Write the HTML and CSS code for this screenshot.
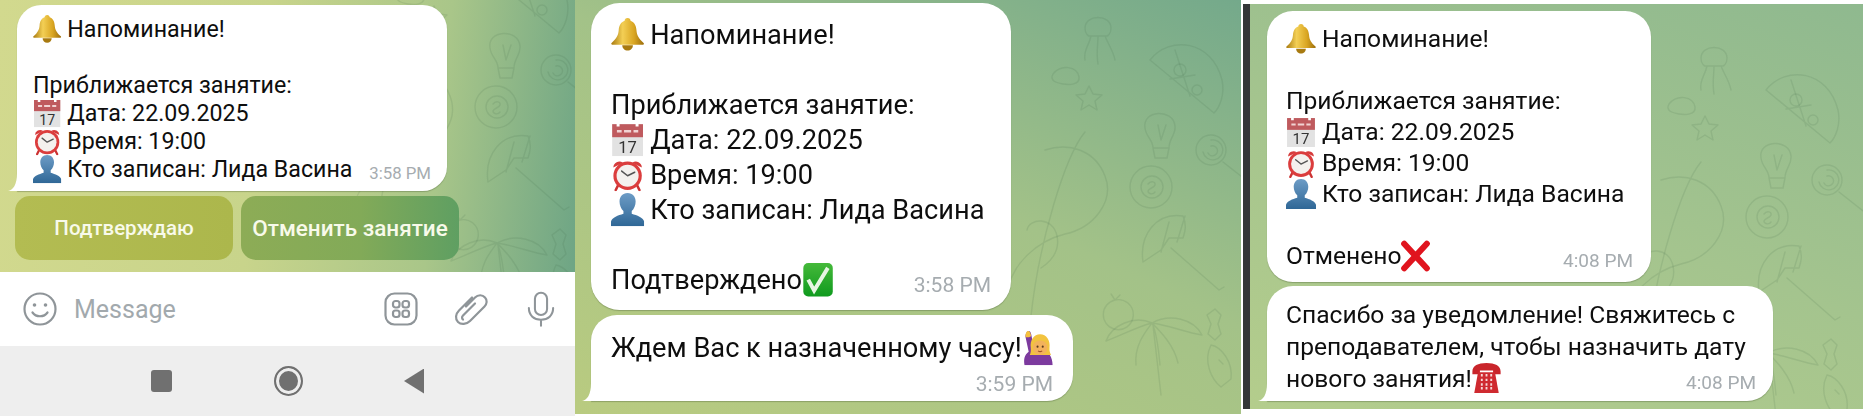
FILE: index.html
```html
<!DOCTYPE html>
<html lang="ru">
<head>
<meta charset="utf-8">
<title>Напоминание</title>
<link rel="stylesheet" href="styles.css">
</head>
<body>
<svg class="defs" xmlns="http://www.w3.org/2000/svg" aria-hidden="true">
  <defs>
    <linearGradient id="gold" x1="0" x2="1" y1="0" y2="0"><stop offset="0" stop-color="#a87a10"/><stop offset=".35" stop-color="#f3cf55"/><stop offset=".7" stop-color="#d9a521"/><stop offset="1" stop-color="#9b6d0c"/></linearGradient>
    <linearGradient id="blue" x1="0" x2="0" y1="0" y2="1"><stop offset="0" stop-color="#6d9cc6"/><stop offset="1" stop-color="#2f6796"/></linearGradient>
    <linearGradient id="grn" x1="0" x2="0" y1="0" y2="1"><stop offset="0" stop-color="#45b93a"/><stop offset="1" stop-color="#0f9a1e"/></linearGradient>
    <symbol id="bell" viewBox="0 0 28 28">
      <path d="M14 0c1.600 0 2.500 1 2.500 2.300 3.500 1.300 4.700 4.300 5 8 .3 4.200 1.800 7 6 10.700.6.600.3 1.500-.5 1.500H1c-.8 0-1.100-.9-.5-1.500C4.700 17.300 6.200 14.500 6.500 10.300c.3-3.700 1.500-6.700 5-8C11.500 1 12.400 0 14 0z" fill="url(#gold)"/>
      <path d="M9.500 23h9c0 2.600-2 4.500-4.500 4.500S9.500 25.600 9.500 23z" fill="#a87a10"/>
    </symbol>
    <symbol id="cal" viewBox="0 0 28 28">
      <rect x="1" y="1" width="26" height="27" fill="#e2e2e2"/>
      <rect x="1" y="1" width="26" height="11" fill="#bf5a5e"/>
      <path d="M6 0v3M22 0v3" stroke="#fff" stroke-width="2.500"/>
      <path d="M5 7h4M11 7h6M19 7h4" stroke="#f1d3d3" stroke-width="2"/>
      <text x="14" y="25.500" text-anchor="middle" class="cal-num">17</text>
    </symbol>
    <symbol id="clock" viewBox="0 0 28 28">
      <path d="M2 8a5 5 0 0 1 8-4zM26 8a5 5 0 0 0-8-4z" fill="#d63b3b"/>
      <path d="M6 23l-2 4M22 23l2 4" stroke="#c33" stroke-width="2.200" stroke-linecap="round"/>
      <circle cx="14" cy="15" r="12" fill="#db3d3d"/>
      <circle cx="14" cy="15" r="9.300" fill="#f4f1ee"/>
      <path d="M14 15L9 11M14 15l6-3" stroke="#555" stroke-width="1.300" stroke-linecap="round"/>
    </symbol>
    <symbol id="user" viewBox="0 0 28 28">
      <path d="M14 0c4.300 0 6.800 3.200 6.800 7.200 0 3.200-1.300 6.200-3.300 8v2.300c4.500 1.400 9.500 3 10.500 6.500V28H0v-4c1-3.500 6-5.100 10.500-6.500v-2.300c-2-1.800-3.300-4.800-3.300-8C7.200 3.200 9.700 0 14 0z" fill="url(#blue)"/>
    </symbol>
    <symbol id="check" viewBox="0 0 32 36">
      <rect x="1" y="1" width="30" height="34" rx="5" fill="url(#grn)"/>
      <path d="M6 18l6 11L26 6" fill="none" stroke="#e6f5e2" stroke-width="4"/>
    </symbol>
    <symbol id="girl" viewBox="0 0 30 34">
      <path d="M2 34c-1-6 0-10 4-13L3 7c-.4-2 .8-6 3-6 1.500 0 2 1.500 2.400 3L11 17l8 2c6 1 10 7 10 15z" fill="#7c3a9e"/>
      <path d="M3 7C2.600 4 4 0 6 1c1.500.5 2 3 2.300 5l-2 1z" fill="#f6c23c"/>
      <path d="M8 17c-1-7 3-13 9-13s10 6 9 13c-.3 3 .6 5 1.500 7H7c1-2 1.300-4 1-7z" fill="#f2c33f"/>
      <circle cx="17" cy="17" r="7" fill="#f3b25c"/>
      <circle cx="14.500" cy="16" r="1" fill="#5a3a1c"/><circle cx="19.500" cy="16" r="1" fill="#5a3a1c"/>
      <path d="M15 20c1.300 1 2.700 1 4 0" stroke="#a3522a" stroke-width="1" fill="none"/>
    </symbol>
    <symbol id="cross" viewBox="0 0 30 34">
      <path d="M3 4l24 26M27 4L3 30" stroke="#e0141e" stroke-width="6.500" stroke-linecap="round"/>
    </symbol>
    <symbol id="phone" viewBox="0 0 30 34">
      <path d="M0 10C0 4 6 1 15 1s15 3 15 9v3h-8V9H8v4H0z" fill="#c9252b"/>
      <path d="M6 11h18l4 22H2z" fill="#cf2a30"/>
      <path d="M9 14h2M14 14h2M19 14h2M9 19h2M14 19h2M19 19h2M9 24h2M14 24h2M19 24h2M9 28h2M14 28h2M19 28h2" stroke="#f6d7d7" stroke-width="2.600"/>
    </symbol>
    <g id="wall" fill="none" stroke="currentColor" stroke-width="1.400" stroke-linecap="round" stroke-linejoin="round">
      <path d="M575 60c20-25 62-20 72 20 3 14-2 27-8 33l-64-53zM600 50l15 46M620 75l-25 4"/><circle cx="605" cy="70" r="6"/><circle cx="622" cy="90" r="5"/>
      <path d="M510 28c0-14 26-14 26 0 0 6-4 8-4 8H514s-4-2-4-8zM516 36c-2 10-8 14-6 24M523 36c0 10-2 16 0 28M530 36c3 8 8 14 10 24"/>
      <path d="M570 128c-3-18 28-20 30-2 1 9-6 12-6 22h-16c0-8-7-11-8-20zM578 148l2 10 12 0 2-10M583 125l3 15 5-15"/>
      <circle cx="636" cy="150" r="15"/><path d="M636 140a10 10 0 1 1-8 12M636 146a5 5 0 1 1-3 7M648 162l28 22"/>
      <circle cx="576" cy="187" r="21"/><circle cx="577" cy="187" r="11"/><path d="M573 184c3-4 8-2 7 1s-6 3-7 6c0 3 5 4 7 1"/>
      <path d="M568 262c-4-28 14-50 40-46 4 9 2 16 0 22l-14 0-8 12-18 12zM596 248l48 42 5-3M594 222l-8 30M610 216l-8 26"/>
      <path d="M585 365c-2-22-4-34-8-42M577 323c-18-8-40 2-46 18 12-4 30-14 46-18zM577 323c18-10 42-4 50 12-14-2-34-10-50-12zM577 323c-6 8-18 22-16 42M577 323c8 8 22 22 26 40M578 325l8 70"/>
      <path d="M636 345c10 2 22 16 20 34l-10 8c-10-8-18-26-10-42zM644 360l4 4"/>
      <path d="M540 300a15 15 0 1 1-1 29 15 15 0 0 1 1-29zM540 300l-4-6M540 300l5-5"/>
      <path d="M514 86l4 8 9 1-7 6 2 9-8-5-8 5 2-9-7-6 9-1z"/>
      <path d="M478 74c8-10 24-8 26 3 1 8-10 8-16 7s-14-3-10-10z"/>
      <path d="M510 132c-20 24-46 110-54 184M470 150c24-8 50 0 60 26 10 26-12 52-40 58-28 7-54 30-58 60"/>
      <path d="M452 230c2-12 26-14 30 6 3 14-4 24-16 32"/>
      <path d="M632 315l8-6 6 6-3 9 3 10-6 6-7-6 3-10z"/>
    </g>
  </defs>
</svg>

<div class="screens">
  <section class="panel panel-one">
    <div class="chat">
      <svg class="wallpaper wallpaper-one" viewBox="0 0 666 414" aria-hidden="true"><use href="#wall" class="shift-one"/></svg>
      <div class="bubble bubble-first">
        <div class="line"><svg class="emoji"><use href="#bell"/></svg><span>Напоминание!</span></div>
        <div class="line"></div>
        <div class="line"><span>Приближается занятие:</span></div>
        <div class="line"><svg class="emoji"><use href="#cal"/></svg><span>Дата: 22.09.2025</span></div>
        <div class="line"><svg class="emoji"><use href="#clock"/></svg><span>Время: 19:00</span></div>
        <div class="line"><svg class="emoji"><use href="#user"/></svg><span>Кто записан: Лида Васина</span><time class="time">3:58 PM</time></div>
      </div>
      <div class="keyboard">
        <div class="key key-yes">Подтверждаю</div>
        <div class="key key-no">Отменить занятие</div>
      </div>
    </div>
    <div class="composer">
      <svg class="tool tool-smile" viewBox="0 0 34 34"><circle cx="17" cy="17" r="15.500"/><circle class="solid" cx="11.500" cy="13" r="1.800"/><circle class="solid" cx="22.500" cy="13" r="1.800"/><path d="M9.500 20.500c3.500 5 11.500 5 15 0"/></svg>
      <span class="placeholder">Message</span>
      <svg class="tool" viewBox="0 0 34 34"><rect x="1.500" y="1.500" width="31" height="31" rx="9"/><rect x="9" y="9" width="6.500" height="6.500" rx="2.500"/><rect x="18.500" y="9" width="6.500" height="6.500" rx="2.500"/><rect x="9" y="18.500" width="6.500" height="6.500" rx="2.500"/><rect x="18.500" y="18.500" width="6.500" height="6.500" rx="2.500"/></svg>
      <svg class="tool tool-clip" viewBox="0 0 34 34"><path d="M12 14.500l9-9c3-3 7.500-3 10 0 2.500 2.500 2 6.500-.5 9L16 29c-3.500 3.500-9 4-12 1-3-3-2.500-8 1-11.500L18 5.500M21 11.500L9 23.500c-1.500 1.500-1 3.500 0 4"/></svg>
      <svg class="tool tool-mic" viewBox="0 0 30 38"><rect x="8.500" y="1.500" width="13" height="24" rx="6.500"/><path d="M2 18c0 8 5.500 12.500 13 12.500S28 26 28 18M15 30.500V37"/></svg>
    </div>
    <div class="navbar">
      <span class="nav-square"></span>
      <span class="nav-circle"></span>
      <span class="nav-back"></span>
    </div>
  </section>

  <section class="panel panel-two">
    <svg class="wallpaper" viewBox="0 0 666 414" aria-hidden="true"><use href="#wall"/></svg>
    <div class="bubble bubble-plain">
      <div class="line"><svg class="emoji"><use href="#bell"/></svg><span>Напоминание!</span></div>
      <div class="line"></div>
      <div class="line"><span>Приближается занятие:</span></div>
      <div class="line"><svg class="emoji"><use href="#cal"/></svg><span>Дата: 22.09.2025</span></div>
      <div class="line"><svg class="emoji"><use href="#clock"/></svg><span>Время: 19:00</span></div>
      <div class="line"><svg class="emoji"><use href="#user"/></svg><span>Кто записан: Лида Васина</span></div>
      <div class="line"></div>
      <div class="line"><span>Подтверждено</span><svg class="emoji emoji-end"><use href="#check"/></svg><time class="time">3:58 PM</time></div>
    </div>
    <div class="bubble bubble-reply">
      <div class="line"><span>Ждем Вас к назначенному часу!</span><svg class="emoji emoji-end"><use href="#girl"/></svg></div>
      <div class="line line-time"><time class="time">3:59 PM</time></div>
    </div>
  </section>

  <section class="panel panel-three">
    <svg class="wallpaper" viewBox="0 0 666 414" aria-hidden="true"><use href="#wall" class="shift-three"/></svg>
    <div class="bubble bubble-plain">
      <div class="line"><svg class="emoji"><use href="#bell"/></svg><span>Напоминание!</span></div>
      <div class="line"></div>
      <div class="line"><span>Приближается занятие:</span></div>
      <div class="line"><svg class="emoji"><use href="#cal"/></svg><span>Дата: 22.09.2025</span></div>
      <div class="line"><svg class="emoji"><use href="#clock"/></svg><span>Время: 19:00</span></div>
      <div class="line"><svg class="emoji"><use href="#user"/></svg><span>Кто записан: Лида Васина</span></div>
      <div class="line"></div>
      <div class="line"><span>Отменено</span><svg class="emoji emoji-end"><use href="#cross"/></svg><time class="time">4:08 PM</time></div>
    </div>
    <div class="bubble bubble-reply">
      <div class="line"><span>Спасибо за уведомление! Свяжитесь с</span></div>
      <div class="line"><span>преподавателем, чтобы назначить дату</span></div>
      <div class="line"><span>нового занятия!</span><svg class="emoji emoji-end"><use href="#phone"/></svg><time class="time">4:08 PM</time></div>
    </div>
  </section>
</div>
</body>
</html>
```
FILE: styles.css
```css
* { box-sizing: border-box; }
html, body { margin: 0; padding: 0; background: #fff; }
body { width: 1868px; height: 416px; overflow: hidden; font-family: Roboto, "Liberation Sans", sans-serif; color: #0e0e0e; }
.defs { position: absolute; width: 0; height: 0; }
.cal-num { font: 400 14px Roboto, sans-serif; fill: #333; }

.screens { display: flex; align-items: flex-start; height: 416px; }

.panel { position: relative; overflow: hidden; flex: none; }

.wallpaper { position: absolute; left: 0; top: 0; width: 666px; height: 414px; color: rgba(60, 100, 70, .13); pointer-events: none; }

/* bubbles */
.bubble { position: relative; background: #fff; border-radius: 1.05em; width: max-content; box-shadow: 0 1px 1px rgba(70, 90, 50, .35); }
.bubble-first::before,
.bubble-reply::before {
  content: ""; position: absolute; left: -9px; bottom: 0; width: 20px; height: 18px; background: #fff;
  clip-path: path("M0 18C5 17 9 12 9 0L20 0L20 18Z");
}
.bubble-first, .bubble-reply { border-bottom-left-radius: 0; }
.line { display: flex; align-items: center; height: var(--lh); white-space: nowrap; }
.emoji { width: 1.22em; height: 1.22em; margin-right: .26em; flex: none; overflow: visible; }
.emoji-end { margin: 0; width: 1.18em; height: 1.3em; }
.time { margin-left: auto; color: #a6acb0; font-size: .77em; padding-top: .5em; }
.line-time { justify-content: flex-end; }

/* panel one */
.panel-one { width: 575px; height: 416px; display: flex; flex-direction: column; }
.chat { position: relative; overflow: hidden; height: 272px; padding: 5px 0 0 17px; background: linear-gradient(96deg, #d2d98e 0%, #c8d48b 45%, #a9c689 75%, #6ea585 100%); }
.shift-one { transform: translate(-80px, -80px); }
.shift-three { transform: translate(-52px, 30px); }
.panel-one .bubble { --lh: 28px; font-size: 23.200px; width: 430px; padding: 10px 16px 8px 16px; }
.panel-one .emoji { margin-right: 6px; }
.panel-one .time { font-size: 16.800px; }
.keyboard { position: relative; display: flex; gap: 8px; margin: 5px 0 0 -2px; }
.key { width: 218px; height: 64px; border-radius: 15px; display: flex; align-items: center; justify-content: center; color: #f8faea; font-size: 22.500px; font-weight: 500; white-space: nowrap; }
.key-yes { background: linear-gradient(90deg, #b3bc52, #acb74c); font-size: 20.500px; }
.key-no { background: linear-gradient(90deg, #8dac56 0%, #82aa58 55%, #5f9f62 100%); }

.composer { height: 74px; background: #fff; display: flex; align-items: center; padding: 0 20px 0 23px; }
.tool { width: 34px; height: 34px; fill: none; stroke: #8f9599; stroke-width: 2.200; stroke-linecap: round; stroke-linejoin: round; flex: none; }
.tool .solid { fill: #8f9599; stroke: none; }
.placeholder { font-size: 25px; color: #a2a9ad; margin-left: 17px; margin-right: auto; }
.tool-clip { margin-left: 36px; }
.tool-mic { margin-left: 39px; width: 28px; height: 38px; }

.navbar { flex: 1; background: #eeeeee; display: flex; align-items: center; padding: 0 151px; justify-content: space-between; }
.nav-square { width: 21px; height: 22px; background: #707070; border-radius: 3px; }
.nav-circle { width: 29px; height: 30px; border: 2.500px solid #707070; border-radius: 50%; background: #707070; box-shadow: inset 0 0 0 3px #eee; }
.nav-back { width: 20px; height: 25px; background: #707070; clip-path: polygon(100% 0, 100% 100%, 0 50%); }

/* panel two */
.panel-two { width: 666px; height: 414px; padding: 3px 0 0 16px; background: linear-gradient(205deg, #74a98b 0%, #a3c288 45%, #b9cb80 100%); filter: blur(.35px); }
.panel-two .bubble { --lh: 35px; font-size: 27.200px; }
.panel-two .bubble-plain { width: 420px; padding: 14px 20px 13px 20px; }
.panel-two .emoji { margin-right: 6px; }
.panel-two .emoji-end { margin: 0; }
.panel-two .bubble-reply { width: 482px; height: 86px; margin-top: 5px; padding: 14px 20px 0 20px; border-radius: 26px 26px 26px 0; }
.panel-two .bubble-reply .line:first-child { height: 38px; }
.panel-two .line-time { height: 24px; }
.panel-two .time { font-size: 21px; }

/* panel three */
.panel-three { width: 620px; height: 405px; margin: 4px 0 0 2px; padding: 7px 0 0 17px; border-left: 7px solid #343638; background: linear-gradient(200deg, #8fb98f 0%, #a4c48e 50%, #b4cd8c 100%); filter: blur(.35px); }
.panel-three .wallpaper { left: -7px; top: -4px; }
.panel-three .bubble { --lh: 31px; font-size: 24.600px; }
.panel-three .bubble-plain { width: 384px; padding: 12px 18px 11px 19px; }
.panel-three .emoji { margin-right: 6px; }
.panel-three .emoji-end { margin: 0; }
.panel-three .bubble-reply { --lh: 32px; width: 506px; margin-top: 4px; padding: 12px 17px 7px 19px; border-radius: 26px 26px 26px 0; }
.panel-three .time { font-size: 19px; }
```
